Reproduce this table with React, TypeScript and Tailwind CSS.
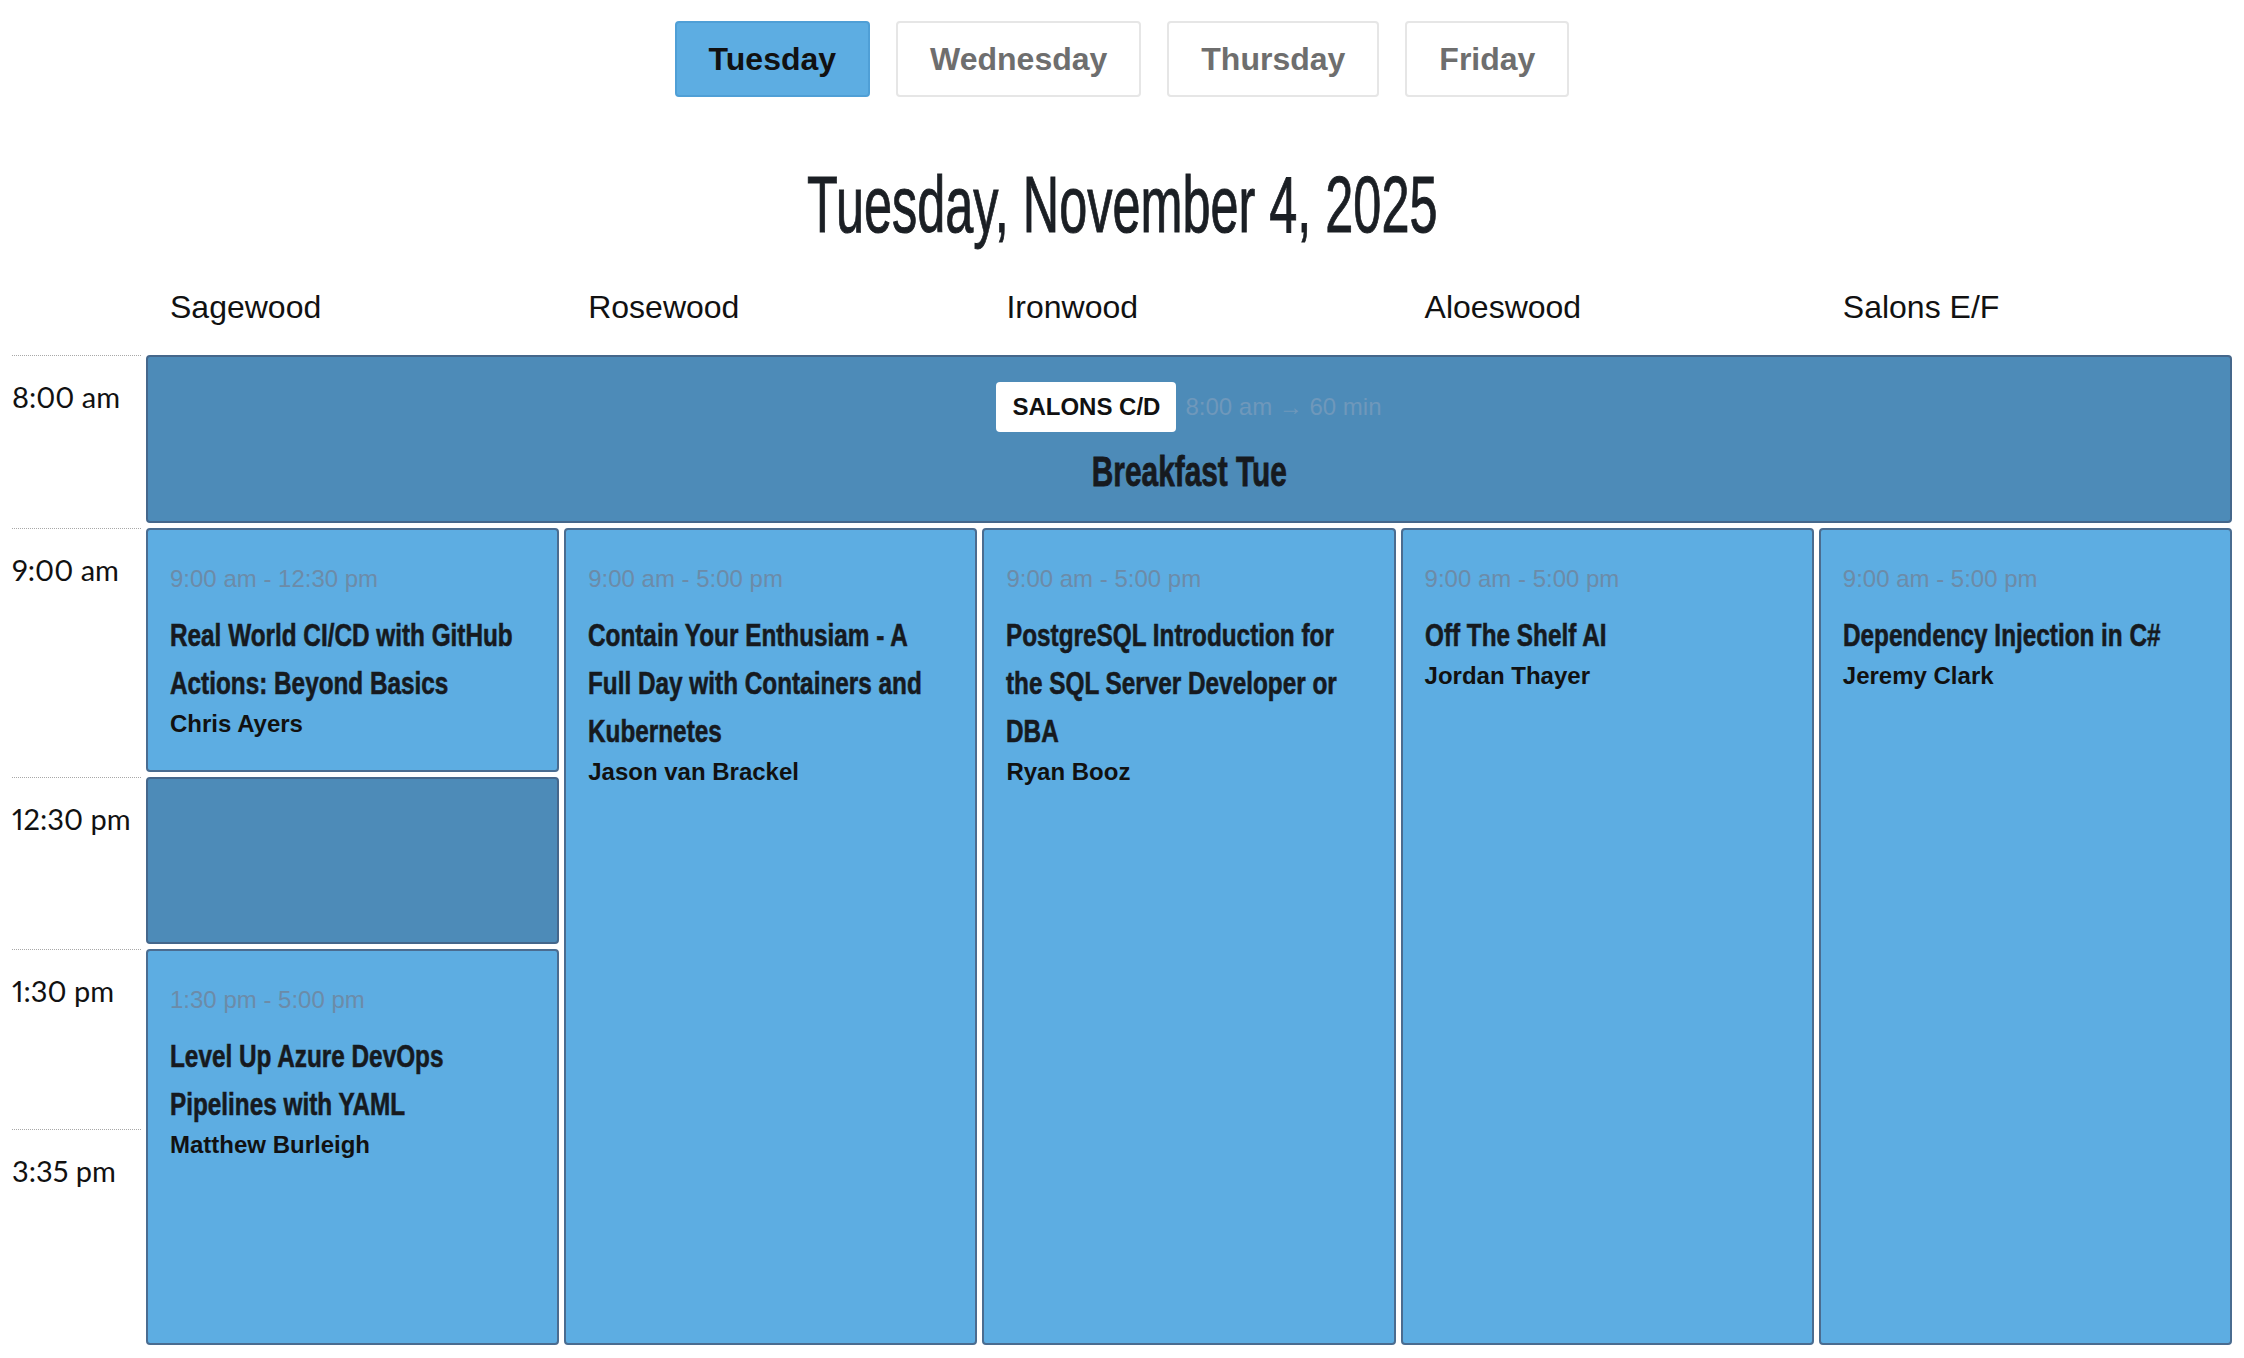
import React from "react";

type Session = {
  time: string;
  title: string;
  speaker: string;
  place: string;
};

const days = ["Tuesday", "Wednesday", "Thursday", "Friday"];
const rooms = ["Sagewood", "Rosewood", "Ironwood", "Aloeswood", "Salons E/F"];
const times = ["8:00 am", "9:00 am", "12:30 pm", "1:30 pm", "3:35 pm"];

const sessions: Session[] = [
  {
    time: "9:00 am - 12:30 pm",
    title: "Real World CI/CD with GitHub Actions: Beyond Basics",
    speaker: "Chris Ayers",
    place: "col-start-2 row-start-2",
  },
  {
    time: "1:30 pm - 5:00 pm",
    title: "Level Up Azure DevOps Pipelines with YAML",
    speaker: "Matthew Burleigh",
    place: "col-start-2 row-start-4 row-span-2",
  },
  {
    time: "9:00 am - 5:00 pm",
    title: "Contain Your Enthusiam - A Full Day with Containers and Kubernetes",
    speaker: "Jason van Brackel",
    place: "col-start-3 row-start-2 row-span-4",
  },
  {
    time: "9:00 am - 5:00 pm",
    title: "PostgreSQL Introduction for the SQL Server Developer or DBA",
    speaker: "Ryan Booz",
    place: "col-start-4 row-start-2 row-span-4",
  },
  {
    time: "9:00 am - 5:00 pm",
    title: "Off The Shelf AI",
    speaker: "Jordan Thayer",
    place: "col-start-5 row-start-2 row-span-4",
  },
  {
    time: "9:00 am - 5:00 pm",
    title: "Dependency Injection in C#",
    speaker: "Jeremy Clark",
    place: "col-start-6 row-start-2 row-span-4",
  },
];

const SessionCard = ({ s }: { s: Session }) => (
  <div
    className={`${s.place} bg-[#5dade2] border-2 border-[#4a6c90] rounded-[4px] px-[22px] pt-[31px] overflow-hidden`}
  >
    <p className="text-[24px] leading-[36px] text-[#6c8ba8]">{s.time}</p>
    {/* narrow headline face: squeeze a bold sans */}
    <h3 className="mt-[14px] w-[131%] origin-left scale-x-[0.76] text-[32px] leading-[48px] font-bold text-[#161a1f] [-webkit-text-stroke:0.6px_#161a1f]">
      {s.title}
    </h3>
    <p className="pt-[2px] text-[24px] leading-[30px] font-bold text-[#111]">{s.speaker}</p>
  </div>
);

export default function App() {
  return (
    <div className="min-h-screen bg-white font-['Liberation_Sans',Arial,sans-serif] text-[#111]">
      {/* day tabs */}
      <div className="flex justify-center gap-[26px] pt-[21px]">
        {days.map((d) => (
          <button
            key={d}
            className={
              d === "Tuesday"
                ? "h-[76px] px-8 rounded-[4px] border-2 border-[#4f9fd6] bg-[#5dade2] text-[32px] font-bold text-[#111]"
                : "h-[76px] px-8 rounded-[4px] border-2 border-[#e6e6e6] bg-white text-[32px] font-bold text-[#6e6e6e]"
            }
          >
            {d}
          </button>
        ))}
      </div>

      <div className="flex justify-center mt-[68px]">
        <h1 className="inline-block scale-x-[0.63] whitespace-nowrap text-[80px] leading-none text-[#1b1f24] [-webkit-text-stroke:1px_#1b1f24]">
          Tuesday, November 4, 2025
        </h1>
      </div>

      <div className="px-3">
        <div className="grid grid-cols-[129px_repeat(5,minmax(0,1fr))] gap-x-[5px] mt-[38px] mb-[24px]">
          <div />
          {rooms.map((r) => (
            <div key={r} className="pl-6 text-[32px] leading-[48px]">
              {r}
            </div>
          ))}
        </div>

        <div className="grid grid-cols-[129px_repeat(5,minmax(0,1fr))] grid-rows-[168px_244px_167px_175px_216px] gap-[5px]">
          {times.map((t, i) => (
            <div
              key={t}
              className={`col-start-1 border-t border-dotted border-[#a8a8a8] pt-[20px] font-['Lato',sans-serif] proportional-nums text-[29px] leading-[42px] text-[#111] ${
                ["row-start-1", "row-start-2", "row-start-3", "row-start-4", "row-start-5"][i]
              }`}
            >
              {t}
            </div>
          ))}

          {/* breakfast across every room */}
          <div className="col-start-2 col-span-5 row-start-1 bg-[#4d8bb8] border-2 border-[#45678b] rounded-[4px] flex flex-col items-center pt-[25px]">
            <div className="flex items-center gap-[9px]">
              <span className="bg-white rounded-[4px] px-4 leading-[36px] py-[7px] text-[24px] font-bold text-[#111]">
                SALONS C/D
              </span>
              <span className="text-[24px] text-[#6f98bb]">8:00 am → 60 min</span>
            </div>
            <h2 className="mt-[15px] inline-block scale-x-[0.71] whitespace-nowrap text-[42px] leading-[50px] font-bold text-[#161a1f] [-webkit-text-stroke:0.8px_#161a1f]">
              Breakfast Tue
            </h2>
          </div>

          {sessions.map((s) => (
            <SessionCard key={s.title} s={s} />
          ))}

          <div className="col-start-2 row-start-3 bg-[#4d8bb8] border-2 border-[#45678b] rounded-[4px]" />
        </div>
      </div>
    </div>
  );
}
